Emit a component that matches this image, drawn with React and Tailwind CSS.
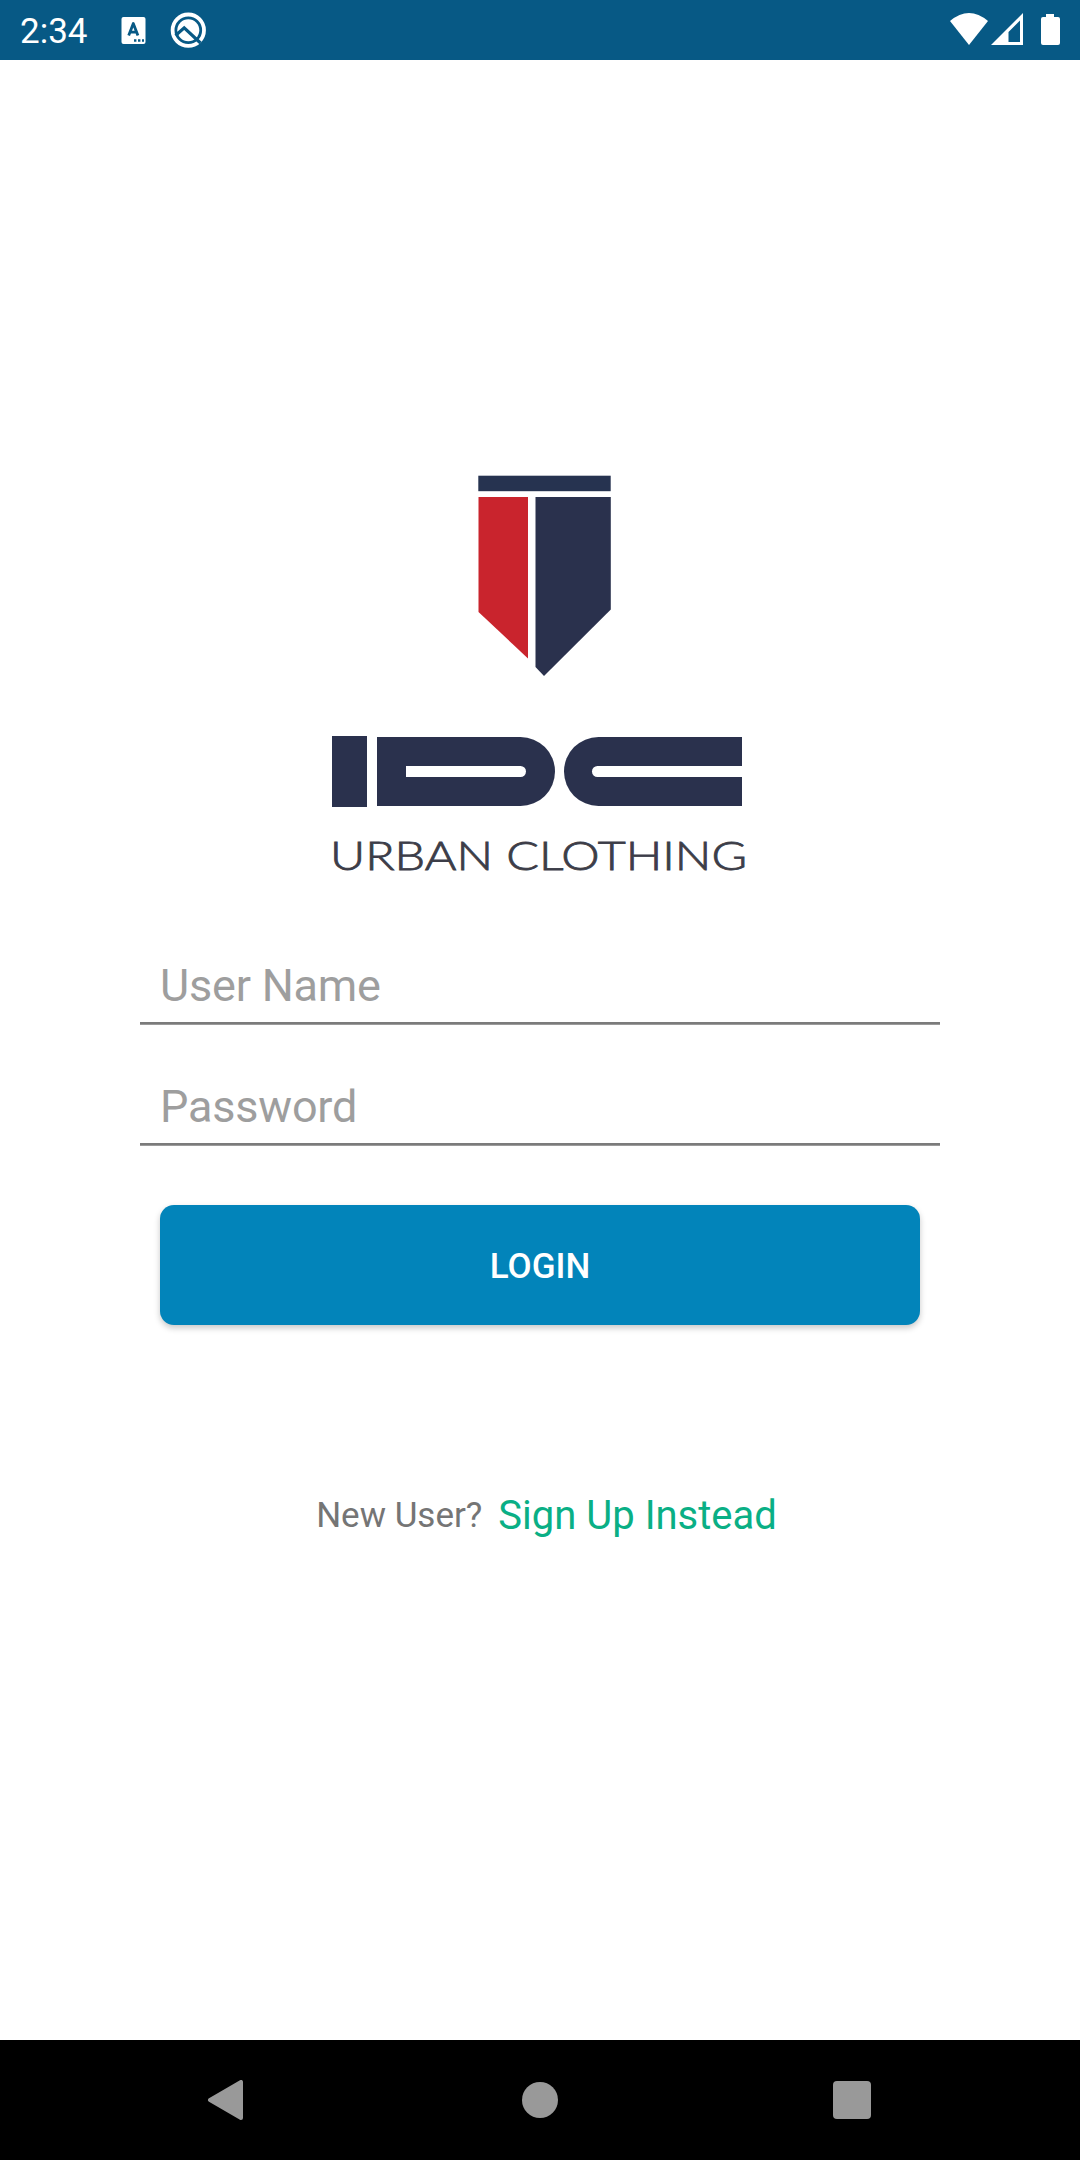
import React from 'react';

function StatusBar() {
  return (
    <div className="flex h-[60px] items-center bg-[#075985] pl-5 text-white">
      <span className="w-[101px] pt-[3px] text-[35px] leading-[60px]">2:34</span>
      <svg className="h-[60px] w-[25px]" viewBox="0 0 25 60" fill="none">
        <rect x="0.5" y="17" width="24" height="27" rx="2" fill="#fff" />
        <path
          d="M7.7 35.5L12.3 23.5L16.9 35.5M9.3 32.2H15.3"
          stroke="#075985"
          strokeWidth="2.8"
          strokeLinejoin="round"
        />
        <path
          d="M13 40.5h2.4M17 40.5h2.4M21 40.5h2"
          stroke="#075985"
          strokeWidth="2.4"
        />
      </svg>
      <svg className="ml-[23px] h-[60px] w-10" viewBox="0 0 40 60" fill="none">
        <circle cx="19.3" cy="30.2" r="15.7" stroke="#fff" strokeWidth="3.8" />
        <circle cx="19.3" cy="30.2" r="11" fill="#fff" />
        <path
          d="M6.5 35.5L15.2 27.8L31.5 43"
          stroke="#075985"
          strokeWidth="3.2"
        />
      </svg>
      <div className="grow" />
      <svg className="h-[60px] w-[130px]" viewBox="0 0 130 60" fill="#fff">
        <path d="M0 21Q19 5 38 21L19 45Z" />
        <path
          fillRule="evenodd"
          d="M41 45L73 13V45ZM58.5 32V42H70V20.5Z"
        />
        <path d="M96 14h8v3h4q2 0 2 2v24q0 2-2 2H93q-2 0-2-2V19q0-2 2-2h3z" />
      </svg>
    </div>
  );
}

function Logo() {
  return (
    <div className="flex flex-col items-center">
      <svg className="ml-[9px] h-[202px] w-[133px]" viewBox="0 0 133 202">
        <rect x="0.3" y="0.7" width="132.4" height="15.5" fill="#263350" />
        <path d="M0.5 22H50V183.5L0.5 137Z" fill="#c9242d" />
        <path d="M57.5 22H132.8V134.5L66 201L57.5 192Z" fill="#2a314d" />
      </svg>
      <div className="mt-[59px] mr-[7px] flex h-[71px] w-[410px] items-center">
        <div className="h-[71px] w-[35px] bg-[#2a314d]" />
        <div className="ml-[10px] flex h-[69px] w-[178px] items-center rounded-r-full bg-[#2a314d] pl-[29px]">
          <div className="h-[11px] w-[120px] rounded-r-full bg-white" />
        </div>
        <div className="ml-[9px] flex h-[69px] w-[178px] items-center justify-end rounded-l-full bg-[#2a314d]">
          <div className="h-[11px] w-[150px] rounded-l-full bg-white" />
        </div>
      </div>
      <svg className="mt-[23px] h-[60px] w-[420px]" viewBox="0 0 420 60">
        <text
          x="0"
          y="39.5"
          textLength="417"
          lengthAdjust="spacingAndGlyphs"
          className="fill-[#3c3d48] stroke-[#3c3d48] stroke-[0.8] font-['Lato'] text-[39px] font-light"
        >
          URBAN CLOTHING
        </text>
      </svg>
    </div>
  );
}

function Field({ label }) {
  return (
    <div className="mb-[39px] flex h-[82px] flex-col justify-end">
      <span className="mb-[9px] pl-5 text-[45px] leading-[54px] tracking-[-0.2px] text-[#9e9e9e]">
        {label}
      </span>
      <div className="h-[3px] border-b border-[#9b9b9b] bg-[#7b7b7b]" />
    </div>
  );
}

function NavBar() {
  return (
    <div className="flex h-[120px] items-center bg-black text-[#999]">
      <svg className="ml-[207px] h-10 w-9" viewBox="0 0 36 40">
        <path
          d="M3 20L34 2V38Z"
          fill="currentColor"
          stroke="currentColor"
          strokeWidth="4"
          strokeLinejoin="round"
        />
      </svg>
      <div className="ml-[279px] size-9 rounded-full bg-[#999]" />
      <div className="ml-[275px] size-[38px] rounded bg-[#999]" />
    </div>
  );
}

export default function App() {
  return (
    <div className="flex h-[2160px] w-[1080px] flex-col bg-white font-['Roboto',sans-serif]">
      <StatusBar />
      <div className="flex grow flex-col items-center pt-[415px]">
        <Logo />
        <div className="mt-[53px] w-[800px]">
          <Field label="User Name" />
          <Field label="Password" />
        </div>
        <button className="mt-5 h-[120px] w-[760px] rounded-[14px] bg-[#0284ba] pt-1 text-[35px] font-medium text-white shadow-[0_3px_6px_rgba(0,0,0,0.22)]">
          LOGIN
        </button>
        <div className="mt-[163px] ml-[13px] flex h-[56px] items-center gap-4">
          <span className="text-[35px] text-[#757575]">New User?</span>
          <span className="text-[40px] text-[#0aaf85]">Sign Up Instead</span>
        </div>
      </div>
      <NavBar />
    </div>
  );
}
